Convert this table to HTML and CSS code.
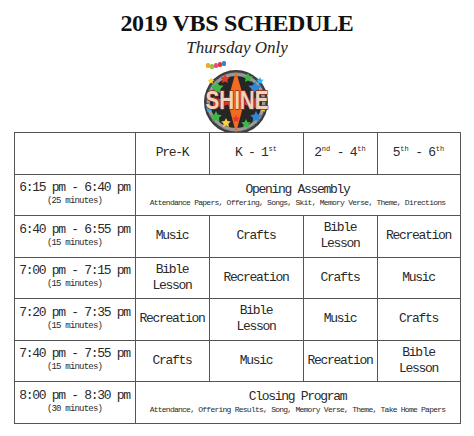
FILE: index.html
```html
<!DOCTYPE html>
<html>
<head>
<meta charset="utf-8">
<link rel="stylesheet" href="styles.css">
</head>
<body>
<div class="page">
  <h1 class="title">2019 VBS SCHEDULE</h1>
  <p class="subtitle">Thursday Only</p>
  <div class="logo">
    <svg width="80" height="75" viewBox="0 0 80 75" aria-label="Shine logo">
      <defs>
        <polygon id="st" points="0,-1 0.29,-0.4 0.95,-0.31 0.48,0.15 0.59,0.81 0,0.5 -0.59,0.81 -0.48,0.15 -0.95,-0.31 -0.29,-0.4"/>
      </defs>
      <circle cx="39" cy="45" r="32" fill="#3b3b3b"/>
      <circle cx="39" cy="45" r="29.5" fill="#9a9a9a"/>
      <circle cx="39" cy="45" r="29.5" fill="none" stroke="#5e5e5e" stroke-width="1.2" stroke-dasharray="1 1.6"/>
      <circle cx="39" cy="45" r="26" fill="#262626"/>
      <polygon points="39,14 30,46 48,46" fill="#f36b21"/>
      <polygon points="39,76 31,46 47,46" fill="#f36b21"/>
      <polygon points="16,40 36,46 16,52" fill="#e0392b"/>
      <polygon points="62,40 42,46 62,52" fill="#e0392b"/>
      <use href="#st" transform="translate(20 31) scale(7)" fill="#3fb64a"/>
      <use href="#st" transform="translate(58 31) scale(7)" fill="#2f86d6"/>
      <use href="#st" transform="translate(28 22) scale(5)" fill="#e8392e"/>
      <use href="#st" transform="translate(51 21) scale(5)" fill="#3fb64a"/>
      <use href="#st" transform="translate(63 24) scale(4)" fill="#29b6f6"/>
      <use href="#st" transform="translate(14 24) scale(3.5)" fill="#f7d23a"/>
      <use href="#st" transform="translate(19 60) scale(6)" fill="#3fb64a"/>
      <use href="#st" transform="translate(59 60) scale(6)" fill="#2f86d6"/>
      <use href="#st" transform="translate(29 66) scale(5)" fill="#f7d23a"/>
      <use href="#st" transform="translate(49 67) scale(5)" fill="#3fb64a"/>
      <use href="#st" transform="translate(39 62) scale(4)" fill="#e8392e"/>
      <use href="#st" transform="translate(66 52) scale(3.5)" fill="#f7d23a"/>
      <use href="#st" transform="translate(12 52) scale(3.5)" fill="#29b6f6"/>
      <g transform="translate(40 52) scale(0.86 1.05)">
        <text x="0" y="0" text-anchor="middle" class="shine">SHINE</text>
      </g>
      <rect x="9" y="6" width="4" height="5" rx="1.5" fill="#f7a823"/>
      <rect x="13" y="7" width="4" height="5" rx="1.5" fill="#8cc63f"/>
      <rect x="17" y="6" width="4" height="5" rx="1.5" fill="#ec4a8c"/>
      <rect x="21" y="5" width="4" height="5" rx="1.5" fill="#e8392e"/>
      <rect x="25" y="4" width="4" height="5" rx="1.5" fill="#2f86d6"/>
    </svg>
  </div>
  <table class="schedule">
    <colgroup>
      <col class="c-time"><col class="c-a"><col class="c-b"><col class="c-c"><col class="c-d">
    </colgroup>
    <tr>
      <th></th>
      <th>Pre-K</th>
      <th>K - 1<sup>st</sup></th>
      <th>2<sup>nd</sup> - 4<sup>th</sup></th>
      <th>5<sup>th</sup> - 6<sup>th</sup></th>
    </tr>
    <tr>
      <td class="time"><span class="t">6:15 pm - 6:40 pm</span><span class="dur">(25 minutes)</span></td>
      <td colspan="4" class="wide"><span class="t">Opening Assembly</span><span class="note">Attendance Papers, Offering, Songs, Skit, Memory Verse, Theme, Directions</span></td>
    </tr>
    <tr>
      <td class="time"><span class="t">6:40 pm - 6:55 pm</span><span class="dur">(15 minutes)</span></td>
      <td>Music</td><td>Crafts</td><td>Bible<br>Lesson</td><td>Recreation</td>
    </tr>
    <tr>
      <td class="time"><span class="t">7:00 pm - 7:15 pm</span><span class="dur">(15 minutes)</span></td>
      <td>Bible<br>Lesson</td><td>Recreation</td><td>Crafts</td><td>Music</td>
    </tr>
    <tr>
      <td class="time"><span class="t">7:20 pm - 7:35 pm</span><span class="dur">(15 minutes)</span></td>
      <td>Recreation</td><td>Bible<br>Lesson</td><td>Music</td><td>Crafts</td>
    </tr>
    <tr>
      <td class="time"><span class="t">7:40 pm - 7:55 pm</span><span class="dur">(15 minutes)</span></td>
      <td>Crafts</td><td>Music</td><td>Recreation</td><td>Bible<br>Lesson</td>
    </tr>
    <tr>
      <td class="time"><span class="t">8:00 pm - 8:30 pm</span><span class="dur">(30 minutes)</span></td>
      <td colspan="4" class="wide"><span class="t">Closing Program</span><span class="note">Attendance, Offering Results, Song, Memory Verse, Theme, Take Home Papers</span></td>
    </tr>
  </table>
</div>
</body>
</html>
```
FILE: styles.css
```css
html, body {
  margin: 0;
  padding: 0;
  background: #ffffff;
}
.page {
  width: 474px;
  display: flex;
  flex-direction: column;
  align-items: center;
}
.title {
  margin: 11px 0 0 0;
  font-family: "Liberation Serif", "Times New Roman", serif;
  font-weight: bold;
  font-size: 24px;
  line-height: 25px;
  color: #111;
  letter-spacing: -0.3px;
}
.subtitle {
  margin: 3px 0 0 0;
  font-family: "Liberation Serif", "Times New Roman", serif;
  font-style: italic;
  font-size: 17px;
  line-height: 18px;
  color: #222;
}
.logo {
  height: 75px;
  width: 80px;
}
.logo svg {
  display: block;
}
.shine {
  font-family: "Liberation Sans", Arial, sans-serif;
  font-weight: bold;
  font-size: 24px;
  fill: #efd3bd;
  stroke: #8a2e1c;
  stroke-width: 1.4;
  stroke-linejoin: round;
  paint-order: stroke;
}
.schedule {
  border-collapse: collapse;
  table-layout: fixed;
  width: 446px;
  font-family: "Liberation Mono", "Courier New", monospace;
  color: #2a2a2a;
}
.c-time { width: 121px; }
.c-a { width: 74px; }
.c-b { width: 94px; }
.c-c { width: 74px; }
.c-d { width: 83px; }
.schedule th, .schedule td {
  border: 1px solid #555;
  height: 40.5px;
  padding: 0 2px;
  text-align: center;
  vertical-align: middle;
  font-weight: normal;
  font-size: 13px;
  letter-spacing: -1.3px;
  line-height: 16px;
}
.schedule sup {
  font-size: 7px;
  letter-spacing: 0;
  line-height: 0;
  vertical-align: 5px;
  margin-left: 1px;
}
.schedule .t {
  display: block;
  line-height: 14px;
}
.schedule .dur {
  display: block;
  font-size: 9px;
  letter-spacing: -0.8px;
  line-height: 13px;
}
.schedule .wide .t {
  line-height: 15px;
  padding-top: 1px;
}
.schedule .note {
  display: block;
  font-size: 8px;
  letter-spacing: -0.75px;
  line-height: 12px;
  white-space: nowrap;
}
```
